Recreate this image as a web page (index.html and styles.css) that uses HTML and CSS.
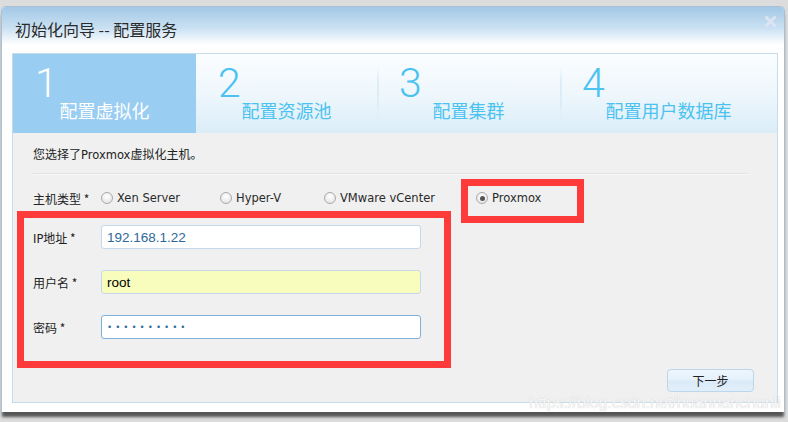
FILE: index.html
```html
<!DOCTYPE html>
<html lang="zh-CN">

<head>
    <meta charset="UTF-8">
    <title>初始化向导 -- 配置服务</title>
    <link rel="stylesheet" href="styles.css">
</head>

<body>
    <div class="window">
        <div class="titlebar">
            <span class="title">初始化向导 -- 配置服务</span>
            <svg class="close" width="11" height="11" viewBox="0 0 11 11">
                <path d="M1.5 1.5 L9.5 9.5 M9.5 1.5 L1.5 9.5" stroke="#dbe4f0" stroke-width="3" stroke-linecap="round" />
            </svg>
        </div>

        <div class="panel">
            <div class="steps">
                <div class="step active">
                    <span class="step-num">1</span>
                    <span class="step-label">配置虚拟化</span>
                </div>
                <div class="step">
                    <span class="step-num">2</span>
                    <span class="step-label">配置资源池</span>
                </div>
                <div class="step">
                    <span class="step-num">3</span>
                    <span class="step-label">配置集群</span>
                </div>
                <div class="step">
                    <span class="step-num">4</span>
                    <span class="step-label">配置用户数据库</span>
                </div>
            </div>

            <div class="content">
                <p class="intro">您选择了<span class="latin">Proxmox</span>虚拟化主机。</p>
                <div class="divider"></div>

                <div class="form-row type-row">
                    <span class="field-label">主机类型 *</span>
                    <div class="radios">
                        <label class="radio-item"><span class="radio"></span>Xen Server</label>
                        <label class="radio-item"><span class="radio"></span>Hyper-V</label>
                        <label class="radio-item"><span class="radio"></span>VMware vCenter</label>
                        <label class="radio-item"><span class="radio checked"></span>Proxmox</label>
                    </div>
                </div>

                <div class="form-row field">
                    <span class="field-label"><span class="latin">IP</span>地址 *</span>
                    <input class="text-input ip" type="text" value="192.168.1.22">
                </div>
                <div class="form-row field">
                    <span class="field-label">用户名 *</span>
                    <input class="text-input user" type="text" value="root">
                </div>
                <div class="form-row field">
                    <span class="field-label">密码 *</span>
                    <input class="text-input pass" type="text" value="••••••••••">
                </div>

                <div class="actions">
                    <button class="btn-next">下一步</button>
                </div>
            </div>
        </div>

        <div class="mark mark-type"></div>
        <div class="mark mark-fields"></div>
        <div class="watermark">https://blog.csdn.net/huannanchunli</div>
    </div>
</body>

</html>
```

FILE: styles.css
```css
body {
    margin: 0;
    background-color: #dcdcdc;
    font-family: "DejaVu Sans", "Noto Sans CJK SC", sans-serif;
    color: #222222;
    height: 422px;
    overflow: hidden;
}

.window {
    position: relative;
    box-sizing: border-box;
    width: 784px;
    height: 406px;
    margin: 6px 0 0 1px;
    padding: 0 6px 9px 10px;
    background-color: #ffffff;
    border: 1px solid #a9c0d4;
    border-bottom: none;
    border-radius: 5px 5px 0 0;
    box-shadow: 0 6px 3px -1px #555555;
    display: flex;
    flex-direction: column;
}

.titlebar {
    height: 47px;
    margin: 0 -6px 0 -10px;
    padding: 0 8px 0 13px;
    display: flex;
    justify-content: space-between;
    align-items: flex-start;
    background: linear-gradient(to bottom, #a3c8e6 0%, #c9e0f2 45%, #ffffff 82%);
    border-radius: 4px 4px 0 0;
}

.title {
    margin-top: 12px;
    font-family: "Noto Sans CJK SC", "DejaVu Sans", sans-serif;
    font-size: 16px;
    line-height: 20px;
    color: #2a2a2a;
}

.close {
    margin-top: 9px;
}

.panel {
    flex: 1;
    display: flex;
    flex-direction: column;
    border: 1px solid #c5dcec;
    background-color: #f0f0f0;
}

.steps {
    height: 79px;
    display: grid;
    grid-template-columns: 183px 181px 183px 1fr;
    background: linear-gradient(to bottom, #fbfdff 0%, #eef7fc 50%, #dbedf8 100%);
}

.step {
    position: relative;
    display: flex;
    flex-direction: column;
    color: #4cc2f1;
}

.step + .step::before {
    content: "";
    position: absolute;
    left: 0;
    top: 12px;
    bottom: 12px;
    width: 2px;
    background: linear-gradient(to bottom, rgba(210, 232, 245, 0), #dcedf7 30%, #dcedf7 70%, rgba(210, 232, 245, 0));
}

.step.active {
    background-color: #99cdf2;
    color: #ffffff;
}

.step.active::before,
.step.active + .step::before {
    display: none;
}

.step-num {
    margin: 7px 0 0 22px;
    font-family: Roboto, "Liberation Sans", sans-serif;
    font-weight: 300;
    font-size: 41px;
    line-height: 44px;
}

.step-label {
    text-align: center;
    margin-top: -6px;
    font-family: "Noto Sans CJK SC", sans-serif;
    font-size: 18px;
    line-height: 22px;
}

.content {
    flex: 1;
    padding: 13px 23px 10px 20px;
    display: flex;
    flex-direction: column;
}

.intro {
    margin: 0;
    font-family: "Noto Sans CJK SC", sans-serif;
    font-size: 12px;
    line-height: 16px;
}

.latin {
    font-family: "DejaVu Sans", sans-serif;
    font-size: 11.5px;
}

.divider {
    height: 1px;
    margin: 10px 7px 0 0;
    background-color: #e2e2e2;
    box-shadow: 0 1px 0 #f8f8f8;
}

.form-row {
    display: flex;
    align-items: center;
}

.field-label {
    width: 68px;
    flex-shrink: 0;
    font-family: "Noto Sans CJK SC", sans-serif;
    font-size: 12px;
}

.type-row {
    height: 20px;
    margin-top: 14px;
}

.radios {
    display: grid;
    grid-template-columns: 119px 104px 152px auto;
    font-size: 11.5px;
    color: #2a2a2a;
}

.radio-item {
    display: flex;
    align-items: center;
    gap: 4px;
}

.radio {
    box-sizing: border-box;
    width: 12px;
    height: 12px;
    border-radius: 50%;
    border: 1px solid #a9a9a9;
    background: radial-gradient(circle at 50% 35%, #ffffff 0%, #e6e6e6 80%);
    display: flex;
    align-items: center;
    justify-content: center;
}

.radio.checked::after {
    content: "";
    width: 5px;
    height: 5px;
    border-radius: 50%;
    background-color: #555555;
}

.field {
    height: 24px;
    margin-top: 21px;
}

.type-row + .field {
    margin-top: 17px;
}

.text-input {
    box-sizing: border-box;
    width: 320px;
    height: 24px;
    padding: 0 5px;
    border: 1px solid #c6d9ea;
    border-radius: 3px;
    background-color: #ffffff;
    font-family: "Liberation Sans", sans-serif;
    font-size: 13.5px;
    color: #000000;
    outline: none;
}

.text-input.ip {
    color: #2d6898;
}

.text-input.user {
    background-color: #f8fcbc;
}

.text-input.pass {
    padding-left: 6px;
    border-color: #7eb0dc;
    color: #2d6898;
    font-size: 9px;
    letter-spacing: 5px;
}

.actions {
    margin-top: 30px;
    display: flex;
    justify-content: flex-end;
}

.btn-next {
    width: 87px;
    height: 23px;
    padding: 0;
    border: 1px solid #bcd6ea;
    border-radius: 4px;
    background: linear-gradient(to bottom, #eef6fd 0%, #e4f0fb 48%, #d9eaf8 52%, #e2effa 100%);
    font-family: "Noto Sans CJK SC", sans-serif;
    font-size: 12px;
    color: #222222;
    cursor: pointer;
}

.mark {
    position: absolute;
    box-sizing: border-box;
    border: 7px solid #fe3a3a;
}

.mark-type {
    left: 459px;
    top: 172px;
    width: 123px;
    height: 44px;
}

.mark-fields {
    left: 15px;
    top: 204px;
    width: 434px;
    height: 157px;
}

.watermark {
    position: absolute;
    left: 527px;
    top: 387px;
    font-family: "Liberation Sans", sans-serif;
    font-size: 16px;
    line-height: 18px;
    color: #f6f6f6;
    text-shadow: 0 0 1px #c8c8c8;
}
```
